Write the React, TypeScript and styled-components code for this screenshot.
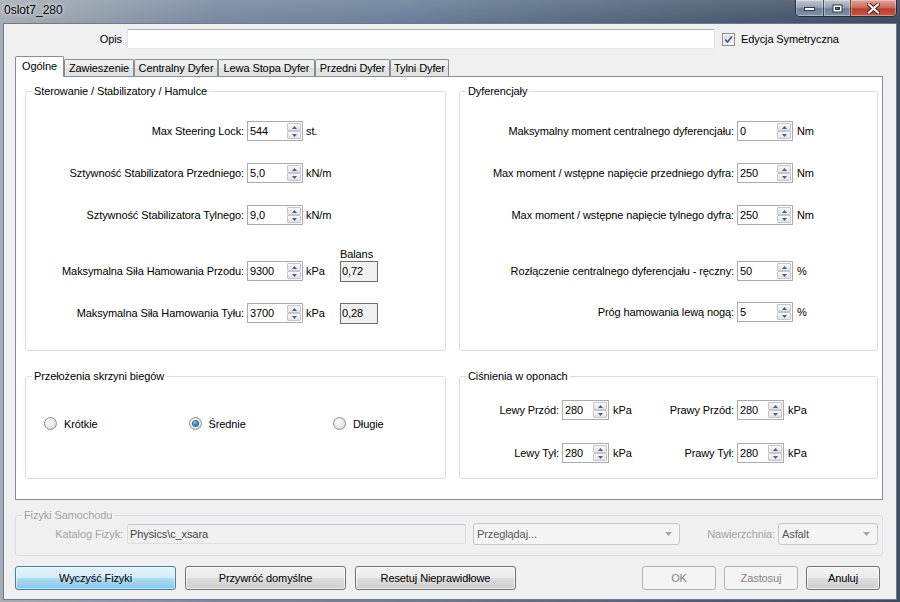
import React from 'react';
import styled, { createGlobalStyle, css } from 'styled-components';

const Global = createGlobalStyle`
  html, body { margin: 0; padding: 0; }
  body {
    width: 900px; height: 602px; overflow: hidden;
    font-family: "Liberation Sans", Arial, sans-serif;
    font-size: 11px; color: #000;
    letter-spacing: -0.1px;
  }
  * { box-sizing: border-box; }
`;

const Window = styled.div`
  width: 900px;
  height: 602px;
  display: flex;
  flex-direction: column;
  padding: 0 3px 2px 3px;
  background:
    linear-gradient(180deg, rgba(255,255,255,0.12) 0px, rgba(255,255,255,0) 23px),
    linear-gradient(90deg, #a7adb4 0%, #929eab 10%, #7888a0 24%, #6b7e98 45%, #5a6c84 62%, #4b5b71 80%, #3e4c5f 100%);
`;

const TitleBar = styled.div`
  height: 23px;
  display: flex;
  align-items: flex-start;
  justify-content: space-between;
`;

const Title = styled.div`
  font-family: "Liberation Sans", Arial, sans-serif;
  font-size: 12px;
  letter-spacing: 0;
  line-height: 14px;
  padding: 3px 0 0 1px;
  color: #000;
  text-shadow: 0 0 4px rgba(255,255,255,0.85), 0 0 8px rgba(255,255,255,0.6);
`;

const Controls = styled.div`
  display: flex;
  height: 17px;
  border: 1px solid rgba(30, 40, 55, 0.85);
  border-top: none;
  border-radius: 0 0 5px 5px;
  overflow: hidden;
`;

const CtrlButton = styled.div<{ $w: number; $close?: boolean }>`
  width: ${p => p.$w}px;
  height: 100%;
  display: flex;
  align-items: center;
  justify-content: center;
  border-left: 1px solid rgba(30, 40, 55, 0.7);
  &:first-child { border-left: none; }
  background: ${p => p.$close
    ? 'linear-gradient(180deg, #e0a397 0%, #cf6f60 45%, #b8402f 55%, #c9553f 100%)'
    : 'linear-gradient(180deg, rgba(225,232,240,0.75) 0%, rgba(180,192,206,0.7) 45%, rgba(120,138,160,0.75) 55%, rgba(150,168,190,0.75) 100%)'};
  box-shadow: inset 0 0 0 1px rgba(255,255,255,0.35);
`;

const Client = styled.div`
  flex: 1;
  display: flex;
  flex-direction: column;
  background: #f0f0f0;
  border: 1px solid #6b7a8c;
`;

const TopRow = styled.div`
  display: flex;
  align-items: center;
  height: 20px;
  margin-top: 5px;
`;

const Label = styled.div<{ $w?: number; $ml?: number; $color?: string }>`
  ${p => p.$w !== undefined && css`width: ${p.$w}px; flex-shrink: 0;`}
  margin-left: ${p => p.$ml ?? 0}px;
  text-align: right;
  white-space: nowrap;
  line-height: 13px;
  color: ${p => p.$color ?? '#000'};
`;

const Unit = styled.div<{ $w?: number; $ml?: number }>`
  ${p => p.$w !== undefined && css`width: ${p.$w}px; flex-shrink: 0;`}
  margin-left: ${p => p.$ml ?? 3}px;
  white-space: nowrap;
  line-height: 13px;
`;

const TextInput = styled.div<{ $w: number; $ml?: number; $disabled?: boolean }>`
  width: ${p => p.$w}px;
  height: 20px;
  margin-left: ${p => p.$ml ?? 0}px;
  flex-shrink: 0;
  border: 1px solid;
  border-color: ${p => p.$disabled ? '#c6c9cd #d7d9dc #dcdee1 #d7d9dc' : '#abadb3 #dbdfe6 #e3e9ef #e2e3ea'};
  border-radius: 2px;
  background: ${p => p.$disabled ? '#f0f0f0' : '#fff'};
  color: ${p => p.$disabled ? '#444' : '#000'};
  padding: 0 2px;
  line-height: 18px;
  white-space: nowrap;
`;

const CheckBox = styled.div`
  width: 13px;
  height: 13px;
  margin-left: 7px;
  flex-shrink: 0;
  border: 1px solid #8e8f8f;
  background: linear-gradient(135deg, #dcdcdc 0%, #f0f0f0 60%, #fbfbfb 100%);
  box-shadow: inset 0 0 0 1px #f4f4f4;
  display: flex;
  align-items: center;
  justify-content: center;
`;

const TabStrip = styled.div`
  display: flex;
  align-items: flex-end;
  height: 19px;
  margin: 8px 0 0 11px;
  position: relative;
  z-index: 1;
`;

const Tab = styled.div<{ $w: number; $active?: boolean }>`
  width: ${p => p.$w}px;
  height: ${p => (p.$active ? 21 : 17)}px;
  margin-bottom: ${p => (p.$active ? -1 : 0)}px;
  display: flex;
  align-items: center;
  justify-content: center;
  padding-bottom: ${p => (p.$active ? 2 : 0)}px;
  border: 1px solid #898c95;
  border-bottom: none;
  border-radius: 2px 2px 0 0;
  white-space: nowrap;
  background: ${p => (p.$active ? '#fff' : 'linear-gradient(180deg, #f3f3f3 0%, #ebebeb 50%, #dedede 51%, #e4e4e4 100%)')};
`;

const Panel = styled.div`
  width: 868px;
  height: 424px;
  margin-left: 11px;
  border: 1px solid #898c95;
  background: #fff;
  display: grid;
  grid-template-columns: 421px 419px;
  grid-template-rows: 260px 103px;
  column-gap: 13px;
  row-gap: 25px;
  padding: 14px 0 0 9px;
  align-content: start;
`;

const Group = styled.div<{ $w?: number; $h?: number; $ml?: number; $mt?: number }>`
  display: flex;
  flex-direction: column;
  border: 1px solid #d5dfe5;
  border-radius: 3px;
  ${p => p.$w !== undefined && css`width: ${p.$w}px;`}
  ${p => p.$h !== undefined && css`height: ${p.$h}px;`}
  margin-left: ${p => p.$ml ?? 0}px;
  margin-top: ${p => p.$mt ?? 0}px;
`;

const Legend = styled.div<{ $bg: string; $color?: string }>`
  align-self: flex-start;
  margin: -7px 0 0 6px;
  padding: 0 2px;
  line-height: 13px;
  height: 13px;
  background: ${p => p.$bg};
  color: ${p => p.$color ?? '#000'};
  white-space: nowrap;
`;

const FieldRow = styled.div<{ $mt: number; $h?: number; $pl?: number }>`
  display: flex;
  align-items: center;
  height: ${p => p.$h ?? 20}px;
  margin-top: ${p => p.$mt}px;
  padding-left: ${p => p.$pl ?? 0}px;
`;

const SpinFrame = styled.div<{ $w: number; $ml: number }>`
  width: ${p => p.$w}px;
  height: 20px;
  margin-left: ${p => p.$ml}px;
  flex-shrink: 0;
  display: flex;
  border: 1px solid #a9abb0;
  background: #fff;
`;

const SpinValue = styled.div`
  flex: 1;
  padding-left: 2px;
  line-height: 18px;
  white-space: nowrap;
`;

const SpinButtons = styled.div`
  width: 15px;
  display: flex;
  flex-direction: column;
  padding: 1px 1px 1px 0;
`;

const SpinBtn = styled.div`
  flex: 1;
  display: flex;
  align-items: center;
  justify-content: center;
  border: 1px solid #c3c6cb;
  border-radius: 1px;
  background: linear-gradient(180deg, #f8f8f8 0%, #eeeeee 50%, #e2e2e2 100%);
`;

const ReadOnlyBox = styled.div`
  width: 38px;
  height: 21px;
  margin-left: 3px;
  flex-shrink: 0;
  border: 1px solid #6e6e6e;
  background: #f0f0f0;
  padding-left: 1px;
  line-height: 19px;
`;

const RadioRow = styled.div`
  display: flex;
  align-items: center;
  height: 13px;
  margin-top: 34px;
  padding-left: 18px;
`;

const RadioItem = styled.div`
  width: 144.5px;
  flex-shrink: 0;
  display: flex;
  align-items: center;
  gap: 7px;
  &:last-child { width: auto; }
`;

const RadioCircle = styled.div<{ $checked?: boolean }>`
  width: 13px;
  height: 13px;
  flex-shrink: 0;
  border-radius: 50%;
  border: 1px solid #8e8f8f;
  background: radial-gradient(circle at 35% 35%, #ffffff 0%, #e8e8e8 50%, #cfcfcf 100%);
  display: flex;
  align-items: center;
  justify-content: center;
  &::after {
    content: '';
    display: ${p => (p.$checked ? 'block' : 'none')};
    width: 5px;
    height: 5px;
    border-radius: 50%;
    background: radial-gradient(circle at 40% 35%, #8fd0f5 0%, #2a7ab8 55%, #0e4f85 100%);
    box-shadow: 0 0 0 1px #3a6d95;
  }
`;

const Combo = styled.div<{ $w: number; $ml?: number }>`
  width: ${p => p.$w}px;
  height: 22px;
  margin-left: ${p => p.$ml ?? 0}px;
  flex-shrink: 0;
  display: flex;
  align-items: center;
  justify-content: space-between;
  border: 1px solid #c5c7ca;
  border-radius: 3px;
  background: #f4f4f4;
  color: #555;
  padding: 0 7px 0 3px;
  white-space: nowrap;
`;

const FizykiRow = styled.div`
  display: flex;
  align-items: center;
  height: 22px;
  margin-top: 1px;
`;

const ButtonRow = styled.div`
  display: flex;
  align-items: center;
  height: 24px;
  margin: 10px 16px 0 11px;
`;

const ButtonGroup = styled.div<{ $gap: number; $right?: boolean }>`
  display: flex;
  gap: ${p => p.$gap}px;
  ${p => p.$right && css`margin-left: auto;`}
`;

type BtnVariant = 'normal' | 'focused' | 'disabled';

const Button = styled.div<{ $w: number; $v?: BtnVariant }>`
  width: ${p => p.$w}px;
  height: 24px;
  display: flex;
  align-items: center;
  justify-content: center;
  border-radius: 3px;
  white-space: nowrap;
  ${p => {
    switch (p.$v) {
      case 'focused':
        return css`
          border: 1px solid #3c7fb1;
          background: linear-gradient(180deg, #e6f4fc 0%, #d3ecfa 48%, #b2dcf4 50%, #86c4e8 100%);
          box-shadow: inset 0 0 0 1px rgba(255,255,255,0.55);
          color: #000;
        `;
      case 'disabled':
        return css`
          border: 1px solid #adb2b5;
          background: #f4f4f4;
          color: #838383;
        `;
      default:
        return css`
          border: 1px solid #707070;
          background: linear-gradient(180deg, #f2f2f2 0%, #ebebeb 48%, #dddddd 50%, #cfcfcf 100%);
          box-shadow: inset 0 0 0 1px rgba(255,255,255,0.7);
          color: #000;
        `;
    }
  }}
`;

const Arrow = ({ up }: { up?: boolean }) => (
  <svg width="5" height="3" viewBox="0 0 5 3">
    <polygon points={up ? '0,3 2.5,0 5,3' : '0,0 5,0 2.5,3'} fill="#4d5f85" />
  </svg>
);

const SpinBox = ({ value, w = 56, ml = 3 }: { value: string; w?: number; ml?: number }) => (
  <SpinFrame $w={w} $ml={ml}>
    <SpinValue>{value}</SpinValue>
    <SpinButtons>
      <SpinBtn><Arrow up /></SpinBtn>
      <SpinBtn><Arrow /></SpinBtn>
    </SpinButtons>
  </SpinFrame>
);

const ComboArrow = () => (
  <svg width="7" height="4" viewBox="0 0 7 4">
    <polygon points="0,0 7,0 3.5,4" fill="#a6a6a6" />
  </svg>
);

const tabs = [
  { label: 'Ogólne', w: 49 },
  { label: 'Zawieszenie', w: 70 },
  { label: 'Centralny Dyfer', w: 84 },
  { label: 'Lewa Stopa Dyfer', w: 97 },
  { label: 'Przedni Dyfer', w: 75 },
  { label: 'Tylni Dyfer', w: 59 },
];

const leftRows = [
  { mt: 23, label: 'Max Steering Lock:', value: '544', unit: 'st.' },
  { mt: 22, label: 'Sztywność Stabilizatora Przedniego:', value: '5,0', unit: 'kN/m' },
  { mt: 22, label: 'Sztywność Stabilizatora Tylnego:', value: '9,0', unit: 'kN/m' },
];

const brakeRows = [
  { mt: 0, label: 'Maksymalna Siła Hamowania Przodu:', value: '9300', bal: '0,72' },
  { mt: 22, label: 'Maksymalna Siła Hamowania Tyłu:', value: '3700', bal: '0,28' },
];

const rightRows = [
  { mt: 23, label: 'Maksymalny moment centralnego dyferencjału:', value: '0', unit: 'Nm' },
  { mt: 22, label: 'Max moment / wstępne napięcie przedniego dyfra:', value: '250', unit: 'Nm' },
  { mt: 22, label: 'Max moment / wstępne napięcie tylnego dyfra:', value: '250', unit: 'Nm' },
  { mt: 36, label: 'Rozłączenie centralnego dyferencjału - ręczny:', value: '50', unit: '%' },
  { mt: 21, label: 'Próg hamowania lewą nogą:', value: '5', unit: '%' },
];

const tireRows = [
  { mt: 17, l1: 'Lewy Przód:', l2: 'Prawy Przód:' },
  { mt: 23, l1: 'Lewy Tył:', l2: 'Prawy Tył:' },
];

const radios = [
  { label: 'Krótkie', checked: false },
  { label: 'Średnie', checked: true },
  { label: 'Długie', checked: false },
];

export default function App() {
  return (
    <>
      <Global />
      <Window>
        <TitleBar>
          <Title>0slot7_280</Title>
          <Controls>
            <CtrlButton $w={27}>
              <svg width="11" height="5" viewBox="0 0 11 5">
                <rect x="0.5" y="1.5" width="10" height="3" fill="#fff" stroke="#2d3a4a" strokeWidth="1" />
              </svg>
            </CtrlButton>
            <CtrlButton $w={27}>
              <svg width="11" height="9" viewBox="0 0 11 9">
                <rect x="0.5" y="0.5" width="10" height="8" fill="#2d3a4a" />
                <rect x="1.5" y="1.5" width="8" height="6" fill="#fff" />
                <rect x="3.5" y="3.5" width="4" height="2" fill="#56667a" stroke="#2d3a4a" strokeWidth="1" />
              </svg>
            </CtrlButton>
            <CtrlButton $w={46} $close>
              <svg width="13" height="11" viewBox="0 0 13 11">
                <path d="M2 1.5 L11 9.5 M11 1.5 L2 9.5" stroke="#3a1a16" strokeWidth="4" strokeLinecap="square" />
                <path d="M2 1.5 L11 9.5 M11 1.5 L2 9.5" stroke="#fff" strokeWidth="2.2" strokeLinecap="square" />
              </svg>
            </CtrlButton>
          </Controls>
        </TitleBar>

        <Client>
          <TopRow>
            <Label $w={118}>Opis</Label>
            <TextInput $w={588} $ml={5} />
            <CheckBox>
              <svg width="9" height="9" viewBox="0 0 9 9">
                <path d="M1 4.5 L3.5 7 L8 1.5" fill="none" stroke="#45568a" strokeWidth="1.7" />
              </svg>
            </CheckBox>
            <Unit $ml={6}>Edycja Symetryczna</Unit>
          </TopRow>

          <TabStrip>
            {tabs.map((t, i) => (
              <Tab key={t.label} $w={t.w} $active={i === 0}>{t.label}</Tab>
            ))}
          </TabStrip>

          <Panel>
            <Group>
              <Legend $bg="#fff">Sterowanie / Stabilizatory / Hamulce</Legend>
              {leftRows.map(r => (
                <FieldRow key={r.label} $mt={r.mt}>
                  <Label $w={218}>{r.label}</Label>
                  <SpinBox value={r.value} />
                  <Unit>{r.unit}</Unit>
                </FieldRow>
              ))}
              <FieldRow $mt={23} $h={13} $pl={314}>
                <Unit $ml={0}>Balans</Unit>
              </FieldRow>
              {brakeRows.map(r => (
                <FieldRow key={r.label} $mt={r.mt}>
                  <Label $w={218}>{r.label}</Label>
                  <SpinBox value={r.value} />
                  <Unit $w={31}>kPa</Unit>
                  <ReadOnlyBox>{r.bal}</ReadOnlyBox>
                </FieldRow>
              ))}
            </Group>

            <Group>
              <Legend $bg="#fff">Dyferencjały</Legend>
              {rightRows.map(r => (
                <FieldRow key={r.label} $mt={r.mt}>
                  <Label $w={274}>{r.label}</Label>
                  <SpinBox value={r.value} />
                  <Unit $ml={4}>{r.unit}</Unit>
                </FieldRow>
              ))}
            </Group>

            <Group>
              <Legend $bg="#fff">Przełożenia skrzyni biegów</Legend>
              <RadioRow>
                {radios.map(r => (
                  <RadioItem key={r.label}>
                    <RadioCircle $checked={r.checked} />
                    <span>{r.label}</span>
                  </RadioItem>
                ))}
              </RadioRow>
            </Group>

            <Group>
              <Legend $bg="#fff">Ciśnienia w oponach</Legend>
              {tireRows.map(r => (
                <FieldRow key={r.l1} $mt={r.mt}>
                  <Label $w={99}>{r.l1}</Label>
                  <SpinBox value="280" w={47} />
                  <Unit $w={24} $ml={4}>kPa</Unit>
                  <Label $w={97}>{r.l2}</Label>
                  <SpinBox value="280" w={47} />
                  <Unit $ml={4}>kPa</Unit>
                </FieldRow>
              ))}
            </Group>
          </Panel>

          <Group $w={868} $h={41} $ml={11} $mt={15}>
            <Legend $bg="#f0f0f0" $color="#a3a3a3">Fizyki Samochodu</Legend>
            <FizykiRow>
              <Label $w={107} $color="#a3a3a3">Katalog Fizyk:</Label>
              <TextInput $w={339} $ml={4} $disabled>Physics\c_xsara</TextInput>
              <Combo $w={207} $ml={7}>
                <span>Przeglądaj...</span>
                <ComboArrow />
              </Combo>
              <Label $w={95} $color="#a3a3a3">Nawierzchnia:</Label>
              <Combo $w={100} $ml={3}>
                <span>Asfalt</span>
                <ComboArrow />
              </Combo>
            </FizykiRow>
          </Group>

          <ButtonRow>
            <ButtonGroup $gap={9}>
              <Button $w={161} $v="focused">Wyczyść Fizyki</Button>
              <Button $w={161}>Przywróć domyślne</Button>
              <Button $w={161}>Resetuj Nieprawidłowe</Button>
            </ButtonGroup>
            <ButtonGroup $gap={8} $right>
              <Button $w={74} $v="disabled">OK</Button>
              <Button $w={74} $v="disabled">Zastosuj</Button>
              <Button $w={74}>Anuluj</Button>
            </ButtonGroup>
          </ButtonRow>
        </Client>
      </Window>
    </>
  );
}
